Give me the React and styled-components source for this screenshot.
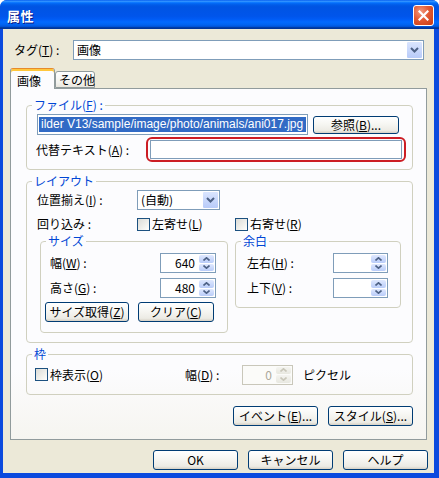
import React from 'react'
import styled, { createGlobalStyle } from 'styled-components'

const GlobalStyle = createGlobalStyle`
  html, body { margin:0; padding:0; background:#ffffff; }
  body {
    font-family: "Noto Sans CJK JP", "Liberation Sans", sans-serif;
    font-size:12px;
    color:#000;
  }
  * { box-sizing:border-box; }
`

const Window = styled.div`
  width:439px;
  height:478px;
  display:flex;
  flex-direction:column;
  background:#0b4ade;
  border-radius:7px 7px 0 0;
  overflow:hidden;
`

const TitleBar = styled.div`
  height:29px;
  flex:none;
  display:flex;
  align-items:center;
  justify-content:space-between;
  padding:0 5px 0 7px;
  background:linear-gradient(to bottom, #0058ee 0%, #3593ff 4%, #288eff 6%, #127dff 8%, #036ffc 10%, #0262ee 14%, #0057e5 20%, #0054e3 24%, #0055eb 56%, #005bf5 66%, #026afe 76%, #0062ef 86%, #0052d6 92%, #0040ab 94%, #003092 100%);
`

const Title = styled.div`
  color:#fff;
  font-weight:bold;
  font-size:13px;
  line-height:15px;
  letter-spacing:0.5px;
  text-shadow:1px 1px 0 #0a1883;
  margin-top:1px;
`

const CloseBtn = styled.div`
  width:21px;
  height:21px;
  border:1px solid #fff;
  border-radius:3px;
  background:radial-gradient(circle at 35% 30%, #f29a7f 0%, #e25a34 45%, #c83a12 100%);
  display:flex;
  align-items:center;
  justify-content:center;
  margin-top:2px;
`

const Body = styled.div`
  flex:1;
  margin:0 5px 5px 3px;
  background:#ece9d8;
  padding:11px 7px 0 7px;
  display:flex;
  flex-direction:column;
`

const TagRow = styled.div`
  display:flex;
  align-items:center;
  height:20px;
  margin:0 3px 0 4px;
`

const Label = styled.span`
  flex:none;
  width:${p => p.$w || 'auto'};
  margin-left:${p => p.$ml || 0}px;
  line-height:14px;
  white-space:nowrap;
`

const Combo = styled.div`
  width:${p => p.$w}px;
  height:20px;
  border:1px solid #7f9db9;
  background:#fff;
  display:flex;
  align-items:center;
`

const ComboText = styled.span`
  flex:1;
  padding-left:3px;
  line-height:14px;
  white-space:nowrap;
`

const DropBtn = styled.div`
  width:17px;
  height:18px;
  border:1px solid #fff;
  border-radius:2px;
  background:linear-gradient(#dae5fe, #b8cbf9);
  display:flex;
  align-items:center;
  justify-content:center;
`

const TabStrip = styled.div`
  display:flex;
  align-items:flex-end;
  height:20px;
  margin-top:8px;
  position:relative;
  z-index:1;
`

const Tab = styled.div`
  height:${p => (p.$active ? 21 : 17)}px;
  width:${p => p.$w}px;
  margin-bottom:${p => (p.$active ? -1 : 0)}px;
  padding-left:${p => p.$pl}px;
  border:1px solid #919b9c;
  border-bottom:${p => (p.$active ? 'none' : '1px solid #919b9c')};
  border-top:1px solid ${p => (p.$active ? '#e68b2c' : '#919b9c')};
  border-radius:3px 3px 0 0;
  background:${p => (p.$active ? '#fcfcfe' : 'linear-gradient(#ffffff, #f3f3ef 70%, #e8e6de)')};
  box-shadow:${p => (p.$active ? 'inset 0 2px 0 #ffc73c' : 'none')};
  line-height:${p => (p.$active ? 19 : 15)}px;
  padding-top:${p => (p.$active ? 2 : 0)}px;
  white-space:nowrap;
`

const Panel = styled.div`
  width:417px;
  height:352px;
  border:1px solid #919b9c;
  background:linear-gradient(#fcfcfe, #fcfcfe 80%, #f6f5f0);
  padding:10px 13px 0 15px;
  display:flex;
  flex-direction:column;
`

const Group = styled.fieldset`
  margin:${p => p.$mt || 0}px 0 0 0;
  padding:0;
  border:1px solid #d0d0bf;
  border-radius:4px;
  min-width:0;
  width:${p => (p.$w ? `${p.$w}px` : 'auto')};
`

const Legend = styled.legend`
  margin-left:5px;
  padding:0 2px;
  color:#0046d5;
  line-height:12px;
  font-size:12px;
`

const GroupBody = styled.div`
  padding:${p => p.$pad};
  display:flex;
  flex-direction:column;
`

const Row = styled.div`
  display:flex;
  align-items:center;
  height:${p => p.$h || 20}px;
  margin-top:${p => p.$mt || 0}px;
  margin-left:${p => p.$ml || 0}px;
  gap:${p => p.$gap || 0}px;
  justify-content:${p => p.$justify || 'flex-start'};
`

const FileInput = styled.div`
  width:271px;
  height:21px;
  border:1px solid #7f9db9;
  background:#fff;
  padding:2px 1px;
  overflow:hidden;
`

const Selected = styled.div`
  height:15px;
  background:#316ac5;
  color:#fff;
  font-family:"Liberation Sans", "Noto Sans CJK JP", sans-serif;
  font-size:12px;
  line-height:15px;
  padding-left:2px;
  white-space:nowrap;
  overflow:hidden;
`

const Highlight = styled.div`
  width:260px;
  height:25px;
  border:2px solid #cc1d24;
  border-radius:6px;
  padding:1px 2px;
`

const TextBox = styled.div`
  width:100%;
  height:100%;
  border:1px solid #7f9db9;
  background:#fff;
`

const Button = styled.button`
  width:${p => p.$w || 85}px;
  height:${p => p.$h || 20}px;
  padding:0;
  border:1px solid #003c74;
  border-radius:3px;
  background:linear-gradient(#ffffff, #f6f6f2 45%, #ecebe4 85%, #d6d0c5);
  font:inherit;
  font-size:12px;
  line-height:${p => (p.$h ? p.$h - 4 : 16)}px;
  color:#000;
  white-space:nowrap;
  flex:none;
`

const Check = styled.span`
  width:13px;
  height:13px;
  border:1px solid #1c5180;
  background:linear-gradient(135deg, #dcdcd7, #f4f4f0 70%, #ffffff);
  flex:none;
  margin-right:2px;
`

const CheckLabel = styled.span`
  display:flex;
  align-items:center;
  width:${p => (p.$w ? `${p.$w}px` : 'auto')};
  margin-left:${p => p.$ml || 0}px;
  line-height:14px;
  white-space:nowrap;
`

const Spin = styled.div`
  width:${p => p.$w}px;
  height:20px;
  flex:none;
  border:1px solid ${p => (p.$disabled ? '#c9c7ba' : '#7f9db9')};
  background:${p => (p.$disabled ? '#fbfbf9' : '#fff')};
  display:flex;
`

const SpinValue = styled.div`
  flex:1;
  text-align:right;
  padding-right:4px;
  line-height:18px;
  color:${p => (p.$disabled ? '#aca899' : '#000')};
`

const SpinButtons = styled.div`
  width:16px;
  display:flex;
  flex-direction:column;
  gap:1px;
  padding:1px 1px 1px 0;
`

const SpinBtn = styled.div`
  flex:1;
  border-radius:2px;
  background:${p => (p.$disabled ? 'linear-gradient(#f4f4f0, #e8e8e0)' : 'linear-gradient(#dfe8fe, #b9ccf9)')};
  display:flex;
  align-items:center;
  justify-content:center;
`

const SubRow = styled.div`
  display:flex;
  align-items:flex-start;
  gap:7px;
  margin:4px 0 0 3px;
`

const FootRow = styled.div`
  display:flex;
  justify-content:flex-end;
  gap:10px;
  margin:10px -1px 0 0;
`

const Chevron = ({ up, color = '#4d6185' }) => (
  <svg width="7" height="4" viewBox="0 0 7 4">
    <path d={up ? 'M0.5 3.5 L3.5 0.8 L6.5 3.5' : 'M0.5 0.5 L3.5 3.2 L6.5 0.5'} fill="none" stroke={color} strokeWidth="1.6" />
  </svg>
)

const DropChevron = () => (
  <svg width="9" height="6" viewBox="0 0 9 6">
    <path d="M1 1 L4.5 4.5 L8 1" fill="none" stroke="#4d6185" strokeWidth="2" />
  </svg>
)

const Spinner = ({ w, value, disabled }) => (
  <Spin $w={w} $disabled={disabled}>
    <SpinValue $disabled={disabled}>{value}</SpinValue>
    <SpinButtons>
      <SpinBtn $disabled={disabled}><Chevron up color={disabled ? '#c9c7ba' : '#4d6185'} /></SpinBtn>
      <SpinBtn $disabled={disabled}><Chevron color={disabled ? '#c9c7ba' : '#4d6185'} /></SpinBtn>
    </SpinButtons>
  </Spin>
)

const App = () => {
  return (
    <>
      <GlobalStyle />
      <Window>
        <TitleBar>
          <Title>属性</Title>
          <CloseBtn>
            <svg width="11" height="11" viewBox="0 0 11 11">
              <path d="M1.5 1.5 L9.5 9.5 M9.5 1.5 L1.5 9.5" stroke="#fff" strokeWidth="2.2" strokeLinecap="square" />
            </svg>
          </CloseBtn>
        </TitleBar>

        <Body>
          <TagRow>
            <Label $w="59px">タグ(<u>T</u>) :</Label>
            <Combo $w={352}>
              <ComboText>画像</ComboText>
              <DropBtn><DropChevron /></DropBtn>
            </Combo>
          </TagRow>

          <TabStrip>
            <Tab $active $w={45} $pl={6}>画像</Tab>
            <Tab $w={40} $pl={3}>その他</Tab>
          </TabStrip>

          <Panel>
            <Group>
              <Legend>ファイル(<u>F</u>) :</Legend>
              <GroupBody $pad="3px 5px 7px 10px">
                <Row $h={21} $gap={5}>
                  <FileInput>
                    <Selected>ilder V13/sample/image/photo/animals/ani017.jpg</Selected>
                  </FileInput>
                  <Button $w={86} $h={18}>参照(<u>B</u>)...</Button>
                </Row>
                <Row $h={25} $mt={2}>
                  <Label $w="110px" $ml={-1}>代替テキスト(<u>A</u>) :</Label>
                  <Highlight><TextBox /></Highlight>
                </Row>
              </GroupBody>
            </Group>

            <Group $mt={5}>
              <Legend>レイアウト</Legend>
              <GroupBody $pad="3px 11px 9px 10px">
                <Row>
                  <Label $w="100px">位置揃え(<u>I</u>) :</Label>
                  <Combo $w={83}>
                    <ComboText>(自動)</ComboText>
                    <DropBtn><DropChevron /></DropBtn>
                  </Combo>
                </Row>
                <Row $h={14} $mt={7}>
                  <Label $w="100px">回り込み :</Label>
                  <CheckLabel $w={98}><Check />左寄せ(<u>L</u>)</CheckLabel>
                  <CheckLabel><Check />右寄せ(<u>R</u>)</CheckLabel>
                </Row>
                <SubRow>
                  <Group $w={188}>
                    <Legend>サイズ</Legend>
                    <GroupBody $pad="6px 11px 10px 4px">
                      <Row>
                        <Label $w="110px" $ml={5}>幅(<u>W</u>) :</Label>
                        <Spinner w={56} value="640" />
                      </Row>
                      <Row $mt={5}>
                        <Label $w="110px" $ml={5}>高さ(<u>G</u>) :</Label>
                        <Spinner w={56} value="480" />
                      </Row>
                      <Row $mt={4} $gap={9}>
                        <Button $w={84}>サイズ取得(<u>Z</u>)</Button>
                        <Button $w={76}>クリア(<u>C</u>)</Button>
                      </Row>
                    </GroupBody>
                  </Group>
                  <Group $w={166}>
                    <Legend>余白</Legend>
                    <GroupBody $pad="6px 11px 9px 11px">
                      <Row>
                        <Label $w="86px">左右(<u>H</u>) :</Label>
                        <Spinner w={55} value="" />
                      </Row>
                      <Row $mt={5}>
                        <Label $w="86px">上下(<u>V</u>) :</Label>
                        <Spinner w={55} value="" />
                      </Row>
                    </GroupBody>
                  </Group>
                </SubRow>
              </GroupBody>
            </Group>

            <Group $mt={5}>
              <Legend>枠</Legend>
              <GroupBody $pad="4px 0 9px 8px">
                <Row $h={21}>
                  <CheckLabel $w={150}><Check />枠表示(<u>O</u>)</CheckLabel>
                  <Label $w="57px">幅(<u>D</u>) :</Label>
                  <Spinner w={51} value="0" disabled />
                  <Label $ml={10}>ピクセル</Label>
                </Row>
              </GroupBody>
            </Group>

            <Row $mt={11} $gap={10} $justify="flex-end">
              <Button>イベント(<u>E</u>)...</Button>
              <Button>スタイル(<u>S</u>)...</Button>
            </Row>
          </Panel>

          <FootRow>
            <Button>OK</Button>
            <Button>キャンセル</Button>
            <Button>ヘルプ</Button>
          </FootRow>
        </Body>
      </Window>
    </>
  )
}

export default App
